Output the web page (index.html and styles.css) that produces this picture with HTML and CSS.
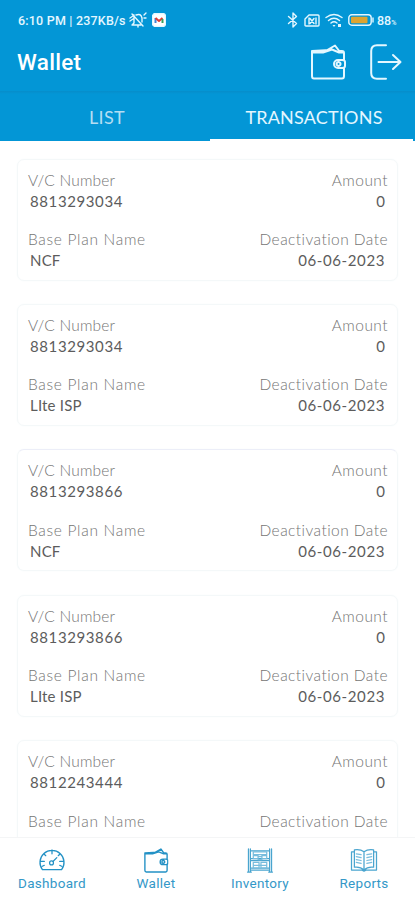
FILE: index.html
```html
<!DOCTYPE html>
<html lang="en">
<head>
<meta charset="utf-8">
<title>Wallet</title>
<link rel="stylesheet" href="styles.css">
</head>
<body>
<svg width="0" height="0" class="defs">
  <symbol id="wallet" viewBox="0 0 36 36"><path d="M34 16V9q0-2-2-2h-3M2 7v25q0 2.500 2 2.500h28q2 0 2-2.500V24M2 7l18-1M2 8.500h11L25 1.500l5 6.500M13 8.500l9-3 7 3h4M34 16h-6a4 4 0 0 0 0 8h4q3 0 3-2v-4q0-2-3-2zM28.500 18a2 2 0 1 0 .1 0"/></symbol>
</svg>
<div class="screen">
  <header class="header">
    <div class="status">
      <span class="clock">6:10 PM | 237KB/s</span>
      <svg class="mute" viewBox="0 0 18 16"><path d="M5 3v8l-2 2h9M7 3q5-2 6 3v4M3 2l11 12M9 13v2M1 6l3-2M1 9l3-2M15 3l2-2M15 6h2"/></svg>
      <svg class="mail" viewBox="0 0 14 14"><rect x=".5" y=".5" width="13" height="13" rx="3" fill="#fff"/><path d="M3.500 10V5" stroke="#4285d4"/><path d="M3.500 5L7 8l3.500-3" stroke="#e33b32"/><path d="M10.500 6v4" stroke="#37a060"/></svg>
      <span class="spacer"></span>
      <svg class="bluetooth" viewBox="0 0 12 16"><path d="M1.500 4.500l8 7L6 15V1l3.500 3.500-8 7"/></svg>
      <svg class="sim" viewBox="0 0 16 13"><path d="M5 1h9q1 0 1 1v9q0 1-1 1H2q-1 0-1-1V5zM6 4.500l4 5M10 4.500l-4 5M5 4v6M12 4v6"/></svg>
      <svg class="wifi" viewBox="0 0 18 15"><path d="M1 4.500q8-6 16 0M3.500 7.500q5.500-4.500 11 0M6 10q3-2.500 6 0"/><path d="M7.500 12h3L9 14zM13 11h3v3h-3z" fill="#e4f7ff" stroke="none"/></svg>
      <svg class="battery" viewBox="0 0 26 12"><rect x=".8" y=".8" width="22.400" height="10.400" rx="3"/><rect x="3" y="2.800" width="16.500" height="6.400" rx="1" fill="#dda431" stroke="none"/><path d="M25 4v4"/></svg>
      <span class="level">88<small>%</small></span>
    </div>
    <div class="appbar">
      <h1>Wallet</h1>
      <svg class="wallet-action"><use href="#wallet"/></svg>
      <svg class="exit" viewBox="0 0 32 36"><path d="M16 1.200H7Q1.200 1.200 1.200 7v22q0 5.800 5.800 5.800h9M8.500 18H30M23 11l7.500 7-7.500 7"/></svg>
    </div>
    <nav class="tabs">
      <div class="tab"><span class="list">LIST</span></div>
      <div class="tab active"><span class="trans">TRANSACTIONS</span></div>
    </nav>
  </header>
  <main class="cards">
    <section class="card">
      <div class="row"><span class="vc">V/C Number</span><span class="amount">Amount</span></div>
      <div class="row value"><span class="num">8813293034</span><span>0</span></div>
      <div class="row second"><span class="plan">Base Plan Name</span><span class="deact">Deactivation Date</span></div>
      <div class="row value"><span class="name">NCF</span><span class="date">06-06-2023</span></div>
    </section>
    <section class="card">
      <div class="row"><span class="vc">V/C Number</span><span class="amount">Amount</span></div>
      <div class="row value"><span class="num">8813293034</span><span>0</span></div>
      <div class="row second"><span class="plan">Base Plan Name</span><span class="deact">Deactivation Date</span></div>
      <div class="row value"><span class="name">LIte ISP</span><span class="date">06-06-2023</span></div>
    </section>
    <section class="card">
      <div class="row"><span class="vc">V/C Number</span><span class="amount">Amount</span></div>
      <div class="row value"><span class="num">8813293866</span><span>0</span></div>
      <div class="row second"><span class="plan">Base Plan Name</span><span class="deact">Deactivation Date</span></div>
      <div class="row value"><span class="name">NCF</span><span class="date">06-06-2023</span></div>
    </section>
    <section class="card">
      <div class="row"><span class="vc">V/C Number</span><span class="amount">Amount</span></div>
      <div class="row value"><span class="num">8813293866</span><span>0</span></div>
      <div class="row second"><span class="plan">Base Plan Name</span><span class="deact">Deactivation Date</span></div>
      <div class="row value"><span class="name">LIte ISP</span><span class="date">06-06-2023</span></div>
    </section>
    <section class="card">
      <div class="row"><span class="vc">V/C Number</span><span class="amount">Amount</span></div>
      <div class="row value"><span class="num">8812243444</span><span>0</span></div>
      <div class="row second"><span class="plan">Base Plan Name</span><span class="deact">Deactivation Date</span></div>
      <div class="row value"><span class="name">NCF</span><span class="date">06-06-2023</span></div>
    </section>
  </main>
  <nav class="bottom">
    <div class="item"><svg viewBox="0 0 28 26"><path d="M4 22.500A12.500 12.500 0 1 1 24 22.500zM14 2v4M5.500 6l2 2M22.500 6l-2 2M2 14h4M22 14h4M15 14l4-4M4 19l2-1M24 19l-2-1"/><circle cx="13.500" cy="15.500" r="2"/></svg><span>Dashboard</span></div>
    <div class="item"><svg class="w" viewBox="0 0 36 36"><use href="#wallet" width="36" height="36"/></svg><span>Wallet</span></div>
    <div class="item"><svg viewBox="0 0 28 26"><path d="M2 1v24M4 1v24M24 1v24M26 1v24M1 25h4M23 25h4M4 3h20M4 11h20M4 13h20M4 21h20M4 23h20" class="mid"/><path d="M7 4h14v3H7zM7 8h5v3H7zM16 8h5v3h-5zM12 9h4v3h-4zM7 15h6v6H7zM15 15h6v6h-6zM7 18h14" class="soft"/></svg><span>Inventory</span></div>
    <div class="item"><svg viewBox="0 0 28 26"><path d="M14 4Q10 1 4 2v18q6-1 10 3 4-4 10-3V2q-6-1-10 2v19M4 4H1v19h11l2 1 2-1h11V4h-3" class="mid"/><path d="M6 6l5 1M6 9l5 1M6 12l5 1M6 15l5 1M17 7l5-1M17 10l5-1M17 13l5-1M17 16l5-1" class="soft"/></svg><span>Reports</span></div>
  </nav>
</div>
</body>
</html>
```
FILE: styles.css
```css
* { box-sizing: border-box; }
body { margin: 0; background: #fff; font-family: Lato, sans-serif; }
.defs { display: block; }
.screen { display: flex; flex-direction: column; width: 415px; height: 900px; overflow: hidden; }
.screen svg { fill: none; stroke: #e4f7ff; stroke-width: 1.4; stroke-linecap: round; stroke-linejoin: round; flex: none; }
.header { flex: none; height: 141px; background: #0396d6; color: #fff; }
.status { display: flex; align-items: center; height: 40px; padding-left: 18px; padding-right: 17px; color: #e4f7ff; font: 500 12.500px Roboto, sans-serif; }
.clock { width: 109px; letter-spacing: .2px; white-space: nowrap; }
.mute { width: 18px; height: 16px; margin-left: 2px; }
.mail { width: 14px; height: 14px; margin-left: 5px; }
.screen .mail path { stroke-width: 2; stroke-linecap: butt; }
.spacer { flex: 1; }
.bluetooth { width: 12px; height: 16px; }
.sim { width: 16px; height: 13px; margin-left: 5px; }
.wifi { width: 18px; height: 15px; margin-left: 5px; }
.battery { width: 26px; height: 12px; margin-left: 5px; }
.level { width: 21px; margin-left: 3px; white-space: nowrap; }
.level small { font-size: 7px; }
.appbar { display: flex; align-items: center; height: 51px; padding: 0 13px 8px 17px; }
h1 { flex: 1; margin: 0; padding-top: 1px; font: 500 22.500px Roboto, sans-serif; letter-spacing: .3px; }
.wallet-action { width: 36px; height: 36px; }
.exit { width: 32px; height: 36px; margin-left: 24px; }
.screen .appbar svg { stroke-width: 2; }
.tabs { display: flex; height: 50px; padding: 0 2px 0 0; background: linear-gradient(#078dca, #0396d6 3px); font-size: 18px; }
.tab { display: flex; align-items: center; justify-content: center; width: 210px; padding-top: 3px; color: #b4def3; border-bottom: 2px solid #0396d6; }
.tab.active { flex: 1; color: #e4f7ff; border-color: #fff; }
.list { padding-left: 4px; letter-spacing: .3px; }
.trans { padding-left: 5px; letter-spacing: .2px; }
.cards { flex: 1; min-height: 0; display: flex; flex-direction: column; gap: 23.4px; padding: 17.500px 17px 0; overflow: hidden; }
.card { flex: none; height: 122px; padding: 10px 9px 0 10px; border: 1px solid #f4f8f9; border-radius: 7px; box-shadow: 0 0 2px #f5fafb; }
.card:nth-child(3) { border-top-color: #eceef8; }
.row { display: flex; justify-content: space-between; height: 21px; line-height: 21px; font-size: 15.500px; color: #747474; white-space: nowrap; font-weight: 300; }
.row.second { margin-top: 17.500px; }
.row.value { padding: 0 3px 0 2px; font-size: 15px; font-weight: 400; color: #5c5c5c; }
.vc { letter-spacing: .2px; }
.amount, .deact { letter-spacing: .45px; }
.plan { letter-spacing: .7px; }
.num, .date { letter-spacing: .6px; }
.name { letter-spacing: .2px; }
.bottom { flex: none; display: grid; grid-template-columns: repeat(4, 104px); height: 63px; background: #fff; border-top: 1px solid #f4f5f6; }
.item { display: flex; flex-direction: column; align-items: center; padding-top: 10px; color: #3498c8; font: 13.500px/16px Roboto, sans-serif; letter-spacing: .3px; }
.screen .item svg { width: 28px; height: 25px; margin-bottom: 2px; stroke: #2391c5; stroke-width: 1.3; }
.screen .item .w { stroke-width: 2; }
.screen .item .mid { stroke: #4aa5cf; }
.screen .item .soft { stroke: #78bddd; }
```
